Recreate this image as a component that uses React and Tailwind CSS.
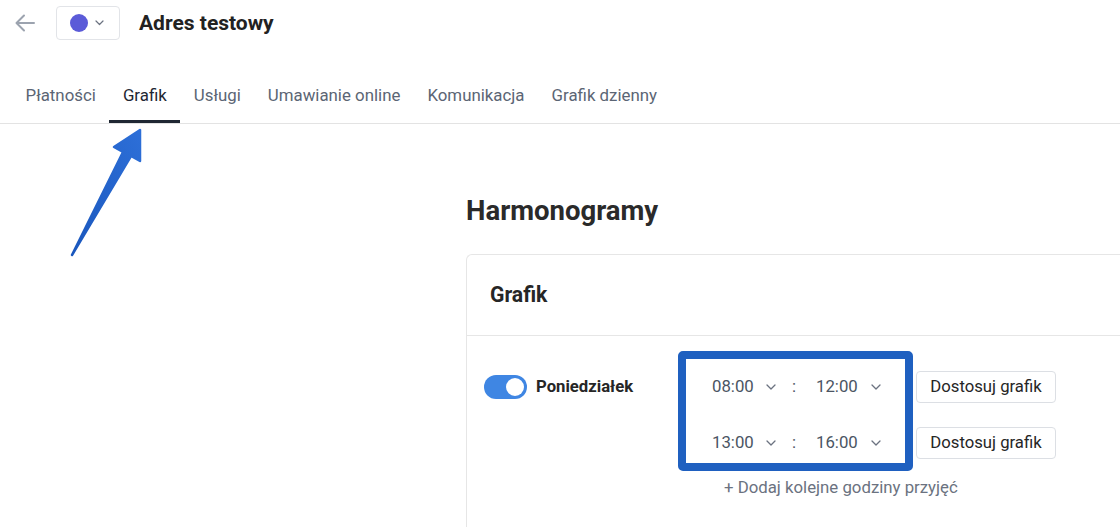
import React from "react";

const Chevron = ({ className = "" }) => (
  <svg width="10" height="6" viewBox="0 0 10 6" className={className} fill="none">
    <path d="M1 1l4 4 4-4" stroke="#6b7280" strokeWidth="1.3" strokeLinecap="round" strokeLinejoin="round" />
  </svg>
);

const TimeRow = ({ a, b }) => (
  <div className="flex items-center h-[32px] pl-[26px] text-[16.8px] text-[#4b5563]">
    <span className="w-[42px]">{a}</span>
    <Chevron className="ml-[12px]" />
    <span className="ml-[16px] w-[4px]">:</span>
    <span className="ml-[20px] w-[42px]">{b}</span>
    <Chevron className="ml-[13px]" />
  </div>
);

export default function App() {
  const tabs = ["Płatności", "Grafik", "Usługi", "Umawianie online", "Komunikacja", "Grafik dzienny"];
  return (
    <div className="relative w-[1120px] h-[527px] overflow-hidden bg-white" style={{ fontFamily: "Roboto, 'Liberation Sans', sans-serif" }}>
      {/* top bar */}
      <div className="h-[46px] flex items-center pl-[14px]">
        <svg width="22" height="22" viewBox="0 0 22 22" fill="none">
          <path d="M20 11H3M10 3.5L2.5 11 10 18.5" stroke="#9ca3af" strokeWidth="2" strokeLinecap="round" strokeLinejoin="round" />
        </svg>
        <div className="ml-[20px] w-[64px] h-[34px] border border-[#e2e4e8] rounded-[4px] flex items-center pl-[13px]">
          <div className="w-[18px] h-[18px] rounded-full bg-[#5b5bd8]" />
          <svg width="9" height="6" viewBox="0 0 9 6" className="ml-[7px]" fill="none">
            <path d="M1 1l3.5 3.5L8 1" stroke="#6b7280" strokeWidth="1.2" strokeLinecap="round" strokeLinejoin="round" />
          </svg>
        </div>
        <div className="ml-[19px] text-[21px] font-bold text-[#222] leading-[24px]">Adres testowy</div>
      </div>

      {/* tabs */}
      <div className="h-[78px] border-b border-[#e3e3e3] flex items-end pl-[12px]">
        {tabs.map((t) => {
          const active = t === "Grafik";
          return (
            <div
              key={t}
              className={
                active
                  ? "px-[13.5px] pb-[15px] border-b-[3px] border-[#1f2733] text-[16.85px] leading-[19px] text-[#1f2733]"
                  : "px-[13.5px] pb-[15px] border-b-[3px] border-transparent text-[16.85px] leading-[19px] text-[#5b6574]"
              }
            >
              {t}
            </div>
          );
        })}
      </div>

      {/* main */}
      <div className="pt-[71px]">
        <div className="ml-[466px] text-[27.5px] leading-[32px] font-bold text-[#2a2a2a]">Harmonogramy</div>
        <div className="ml-[466px] mt-[27px] border-l border-t border-[#e6e6e6] rounded-tl-[6px] h-[400px]">
          <div className="h-[81px] border-b border-[#e6e6e6] flex items-center pl-[23px] text-[21.2px] font-bold text-[#262626]">
            Grafik
          </div>
          <div className="pl-[17px] pt-[15px]">
            <div className="flex items-start">
              <div className="w-[194px] pt-[23px] flex items-center">
                <div className="w-[43px] h-[24px] rounded-full bg-[#3f86e3] flex items-center justify-end pr-[3px]">
                  <div className="w-[18px] h-[18px] rounded-full bg-white" />
                </div>
                <span className="ml-[9px] text-[16.7px] font-bold text-[#262626]">Poniedziałek</span>
              </div>
              <div className="w-[235px] border-[8px] border-[#1f60c0] rounded-[5px] pt-[12px] pb-[4px] flex flex-col gap-[24px]">
                <TimeRow a="08:00" b="12:00" />
                <TimeRow a="13:00" b="16:00" />
              </div>
              <div className="ml-[3px] pt-[20px] flex flex-col gap-[24px]">
                <button className="w-[140px] h-[32px] border border-[#dcdfe4] rounded-[4px] text-[16.7px] text-[#262626] bg-white">Dostosuj grafik</button>
                <button className="w-[140px] h-[32px] border border-[#dcdfe4] rounded-[4px] text-[16.7px] text-[#262626] bg-white">Dostosuj grafik</button>
              </div>
            </div>
            <div className="ml-[240px] mt-[7px] text-[16.8px] leading-[19px] text-[#6b7280]">+ Dodaj kolejne godziny przyjęć</div>
          </div>
        </div>
      </div>

      {/* annotation arrow */}
      <svg className="absolute left-0 top-0 pointer-events-none" width="200" height="280" viewBox="0 0 200 280">
        <defs>
          <linearGradient id="ag" x1="0" y1="1" x2="1" y2="0">
            <stop offset="0" stopColor="#1a57bd" />
            <stop offset="1" stopColor="#2d6fd8" />
          </linearGradient>
        </defs>
        <path
          d="M72 255 L123 152 L114 147 L140 130 L140 161 L131 156 Z"
          fill="url(#ag)"
          stroke="url(#ag)"
          strokeWidth="2.5"
          strokeLinejoin="round"
        />
      </svg>
    </div>
  );
}
